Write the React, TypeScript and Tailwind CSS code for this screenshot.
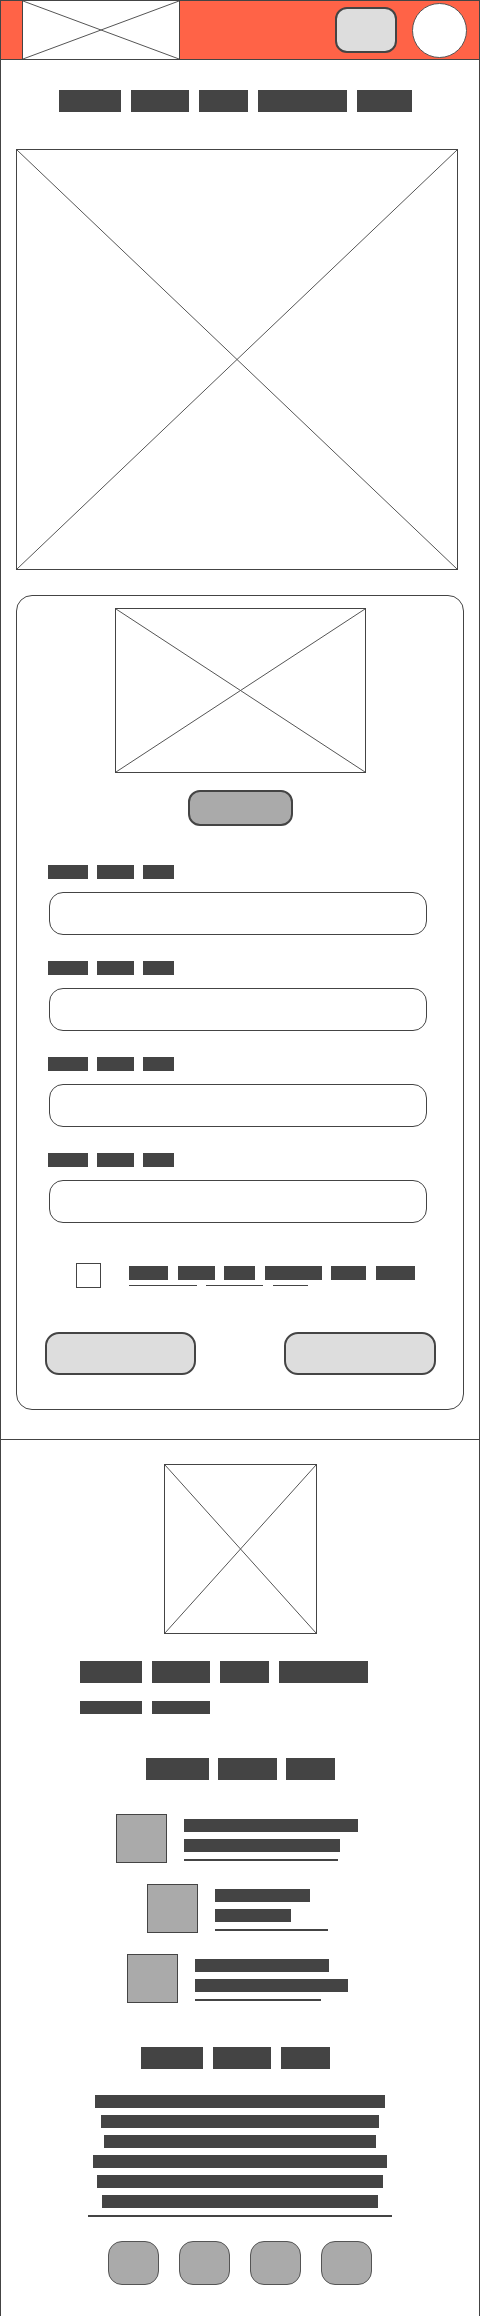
import { clsx } from "clsx";

const dark = "bg-[#444]";

function Placeholder({ className }: { className?: string }) {
  return (
    <div className={clsx("border border-[#444] bg-white", className)}>
      <svg className="block h-full w-full" viewBox="0 0 100 100" preserveAspectRatio="none">
        <line x1="0" y1="0" x2="100" y2="100" stroke="#555" strokeWidth="1" vectorEffect="non-scaling-stroke" />
        <line x1="100" y1="0" x2="0" y2="100" stroke="#555" strokeWidth="1" vectorEffect="non-scaling-stroke" />
      </svg>
    </div>
  );
}

function Bar({ className }: { className: string }) {
  return <div className={clsx(dark, className)} />;
}

function Field() {
  return (
    <div className="flex flex-col">
      <div className="flex gap-[9px]">
        <Bar className="h-[14px] w-[40px]" />
        <Bar className="h-[14px] w-[37px]" />
        <Bar className="h-[14px] w-[31px]" />
      </div>
      <input className="mt-[13px] ml-px h-[43px] w-[378px] rounded-[14px] border border-[#444] bg-transparent outline-none" />
    </div>
  );
}

const items = [
  { top: "w-[174px]", mid: "w-[156px]", line: "w-[154px]" },
  { top: "w-[95px]", mid: "w-[76px]", line: "w-[113px]" },
  { top: "w-[134px]", mid: "w-[153px]", line: "w-[126px]" },
];

const lines = ["w-[290px]", "w-[278px]", "w-[272px]", "w-[294px]", "w-[286px]", "w-[276px]"];

export default function App() {
  return (
    <div className="min-h-[2316px] w-[480px] border-x border-t border-[#444] bg-white">
      {/* header */}
      <header className="flex h-[59px] items-center border-b border-[#444] bg-[#ff6347]">
        <Placeholder className="ml-[21px] h-full w-[158px] border-y-0" />
        <button className="ml-auto h-[46px] w-[62px] rounded-[12px] border-2 border-[#444] bg-[#ddd]" />
        <div className="mr-[12px] ml-[15px] h-[55px] w-[55px] rounded-full border border-[#555] bg-white" />
      </header>

      {/* nav */}
      <nav className="mt-[30px] flex gap-[10px] pl-[58px]">
        <Bar className="h-[22px] w-[62px]" />
        <Bar className="h-[22px] w-[58px]" />
        <Bar className="h-[22px] w-[49px]" />
        <Bar className="h-[22px] w-[89px]" />
        <Bar className="h-[22px] w-[55px]" />
      </nav>

      <Placeholder className="mt-[37px] ml-[15px] h-[421px] w-[442px]" />

      {/* form card */}
      <section className="mt-[25px] ml-[15px] w-[448px] rounded-[16px] border border-[#444] pt-[12px] pb-[34px]">
        <Placeholder className="mx-auto h-[165px] w-[251px]" />
        <button className="mx-auto mt-[17px] block h-[36px] w-[105px] rounded-[12px] border-2 border-[#444] bg-[#aaa]" />

        <div className="mt-[39px] flex flex-col gap-[26px] pl-[31px]">
          <Field />
          <Field />
          <Field />
          <Field />
        </div>

        <div className="mt-[40px] flex pl-[59px]">
          <div className="h-[25px] w-[25px] shrink-0 border border-[#444]" />
          <div className="ml-[28px] pt-[3px]">
            <div className="flex">
              <Bar className="h-[14px] w-[39px]" />
              <Bar className="ml-[10px] h-[14px] w-[37px]" />
              <Bar className="ml-[9px] h-[14px] w-[31px]" />
              <Bar className="ml-[10px] h-[14px] w-[57px]" />
              <Bar className="ml-[9px] h-[14px] w-[35px]" />
              <Bar className="ml-[10px] h-[14px] w-[39px]" />
            </div>
            <div className="mt-[5px] flex">
              <Bar className="h-px w-[68px]" />
              <Bar className="ml-[9px] h-px w-[57px]" />
              <Bar className="ml-[10px] h-px w-[35px]" />
            </div>
          </div>
        </div>

        <div className="mt-[44px] flex justify-between pr-[27px] pl-[28px]">
          <button className="h-[43px] w-[151px] rounded-[14px] border-2 border-[#444] bg-[#ddd]" />
          <button className="h-[43px] w-[152px] rounded-[14px] border-2 border-[#444] bg-[#ddd]" />
        </div>
      </section>

      <div className="mt-[29px] h-px bg-[#444]" />

      {/* footer */}
      <footer className="flex flex-col">
        <Placeholder className="mx-auto mt-[24px] h-[170px] w-[153px]" />

        <div className="mt-[27px] flex gap-[10px] pl-[79px]">
          <Bar className="h-[22px] w-[62px]" />
          <Bar className="h-[22px] w-[58px]" />
          <Bar className="h-[22px] w-[49px]" />
          <Bar className="h-[22px] w-[89px]" />
        </div>
        <div className="mt-[18px] flex gap-[10px] pl-[79px]">
          <Bar className="h-[13px] w-[62px]" />
          <Bar className="h-[13px] w-[58px]" />
        </div>

        <div className="mt-[44px] flex justify-center gap-[9px]">
          <Bar className="h-[22px] w-[63px]" />
          <Bar className="h-[22px] w-[59px]" />
          <Bar className="h-[22px] w-[49px]" />
        </div>

        <div className="mt-[34px] flex flex-col items-center gap-[21px] pr-[6px]">
          {items.map((it, i) => (
            <div key={i} className="flex">
              <div className="h-[49px] w-[51px] border border-[#444] bg-[#aaa]" />
              <div className="ml-[17px] flex flex-col pt-[5px]">
                <Bar className={clsx("h-[13px]", it.top)} />
                <Bar className={clsx("mt-[7px] h-[13px]", it.mid)} />
                <Bar className={clsx("mt-[7px] h-[2px]", it.line)} />
              </div>
            </div>
          ))}
        </div>

        <div className="mt-[44px] flex justify-center gap-[10px] pr-[9px]">
          <Bar className="h-[22px] w-[62px]" />
          <Bar className="h-[22px] w-[58px]" />
          <Bar className="h-[22px] w-[49px]" />
        </div>

        <div className="mt-[26px] flex flex-col items-center gap-[7px]">
          {lines.map((w, i) => (
            <Bar key={i} className={clsx("h-[13px]", w)} />
          ))}
          <Bar className="h-[2px] w-[304px]" />
        </div>

        <div className="mt-[24px] flex justify-center gap-[20px]">
          {[0, 1, 2, 3].map((i) => (
            <div key={i} className="h-[44px] w-[51px] rounded-[14px] border border-[#555] bg-[#aaa]" />
          ))}
        </div>
      </footer>
    </div>
  );
}
